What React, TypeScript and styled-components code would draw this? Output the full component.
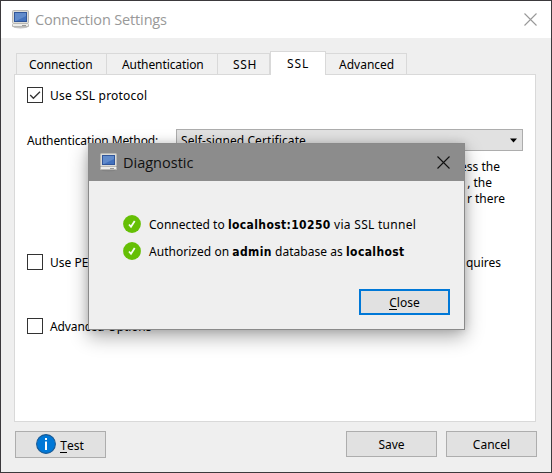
import React from 'react';
import styled, { createGlobalStyle } from 'styled-components';

const GlobalStyle = createGlobalStyle`
  * { box-sizing: border-box; }
  body { margin: 0; background: #3b393c; }
`;

const Window = styled.main`
  position: relative;
  display: flex;
  flex-direction: column;
  width: 552px;
  height: 473px;
  border: 1px solid #3b393c;
  background: #efefef;
  color: #000;
  font: 12px/16px 'Noto Sans', 'Open Sans', sans-serif;
  overflow: hidden;
  white-space: nowrap;
`;

const TitleBar = styled.header`
  display: flex;
  align-items: center;
  height: 37px;
  padding: 0 14px 0 11px;
  background: #fff;
  color: #999;
`;

const Title = styled.h1<{ $tracking: number }>`
  flex: 1;
  margin: 0 0 0 6px;
  font: 400 14.5px/20px 'Open Sans', 'Noto Sans', sans-serif;
  letter-spacing: ${(p) => p.$tracking}px;
`;

const Tracked = styled.span<{ $tracking: number }>`
  letter-spacing: ${(p) => p.$tracking}px;
`;

const Caption = styled(Tracked)`
  display: block;
  padding-top: 2px;
`;

const TabBar = styled.nav`
  display: flex;
  align-items: flex-end;
  height: 36px;
  margin-left: 15px;
  flex: none;
`;

const Tab = styled.div<{ $width: number; $active?: boolean; $tracking?: number; $first?: boolean; $inset: number }>`
  position: relative;
  z-index: ${(p) => (p.$active ? 1 : 0)};
  width: ${(p) => p.$width}px;
  height: ${(p) => (p.$active ? 24 : 21)}px;
  margin-bottom: ${(p) => (p.$active ? -1 : 0)}px;
  padding: ${(p) => (p.$active ? 4 : 3)}px 0 0 ${(p) => p.$inset}px;
  border: 1px solid #d9d9d9;
  border-bottom: 0;
  border-left-width: ${(p) => (p.$first || p.$active ? 1 : 0)}px;
  border-right-width: 1px;
  background: ${(p) => (p.$active ? '#fff' : '#f0f0f0')};
  letter-spacing: ${(p) => p.$tracking ?? 0}px;
`;

const Panel = styled.section`
  display: flex;
  flex-direction: column;
  flex: none;
  width: 522px;
  height: 348px;
  margin-left: 13px;
  padding: 12px 12px 0;
  border: 1px solid #d9d9d9;
  background: #fff;
`;

const Option = styled.label`
  display: flex;
  align-items: center;
  height: 16px;
  gap: 7px;
`;

const Box = styled.span`
  display: flex;
  width: 16px;
  height: 16px;
  border: 1px solid #333;
  background: #fff;
`;

const MethodRow = styled.div`
  display: flex;
  align-items: center;
  height: 22px;
  margin-top: 26px;
`;

const MethodLabel = styled.span`
  width: 149px;
`;

const Select = styled.div`
  display: flex;
  align-items: center;
  justify-content: space-between;
  width: 347px;
  height: 22px;
  padding: 0 4px;
  border: 1px solid #adadad;
  background: #e1e1e1;
`;

const Notes = styled.div`
  display: flex;
  flex-direction: column;
  align-items: flex-end;
  height: 103px;
  padding-top: 8px;
`;

const NoteLine = styled.span<{ $end: number; $drop?: number }>`
  margin-right: ${(p) => p.$end}px;
  padding-top: ${(p) => p.$drop ?? 0}px;
`;

const PemRow = styled.div`
  display: flex;
  justify-content: space-between;
  height: 16px;
  margin-bottom: 48px;
`;

const Footer = styled.footer`
  display: flex;
  align-items: flex-start;
  gap: 9px;
  padding: 9px 14px 0;
`;

const Button = styled.button<{ $height?: number; $focused?: boolean; $push?: boolean }>`
  display: flex;
  align-items: center;
  justify-content: center;
  width: 91px;
  height: ${(p) => p.$height ?? 26}px;
  margin: 0 ${(p) => (p.$push ? 'auto' : 0)} 0 0;
  padding: ${(p) => (p.$push ? '0 1px 1px 0' : '2px 0 0')};
  border: ${(p) => (p.$focused ? '2px solid #0078d7' : '1px solid #adadad')};
  background: #e1e1e1;
  color: #000;
  font: inherit;
`;

const TestLabel = styled.span`
  margin: 4px 0 0 4px;
`;

const Mnemonic = styled.span`
  border-bottom: 1px solid #000;
  display: inline-block;
  line-height: 13px;
`;

const Dialog = styled.section`
  position: absolute;
  left: 87px;
  top: 142px;
  width: 377px;
  height: 187px;
  border: 1px solid #8a8a8a;
  background: #efefef;
  box-shadow: 0 7px 18px rgba(0, 0, 0, 0.32), 0 0 8px rgba(0, 0, 0, 0.14);
`;

const DialogBar = styled.header`
  display: flex;
  align-items: center;
  height: 37px;
  padding: 0 14px 0 11px;
  background: #8c8c8c;
  color: #111;
`;

const Results = styled.div`
  display: flex;
  flex-direction: column;
  gap: 9px;
  padding: 34px 0 0 34px;
`;

const Result = styled.div`
  display: flex;
  align-items: center;
  height: 18px;
  gap: 8px;
`;

const Message = styled.span`
  padding-top: 2px;
  white-space: pre;
`;

const Strong = styled.b`
  font: 700 12px/16px 'DejaVu Sans Condensed', 'DejaVu Sans', sans-serif;
  letter-spacing: 0.38px;
`;

const DialogActions = styled.div`
  display: flex;
  justify-content: flex-end;
  padding: 29px 14px 0 0;
`;

const ComputerIcon = () => (
  <svg width="17" height="19" viewBox="0 0 17 19">
    <ellipse cx="8.5" cy="17.3" rx="7" ry="1.1" fill="#777" opacity=".45" />
    <rect x=".5" y=".5" width="16" height="13" rx="1" fill="#dcdcd7" stroke="#b9b8b4" />
    <rect x="2.5" y="2.5" width="12" height="9" fill="#4372bd" stroke="#31569a" />
    <path d="M3 3h11v3L4 11H3z" fill="#6d96d2" opacity=".7" />
    <path d="M1.5 13.5h14l1 1v2H.5v-2z" fill="#ededea" stroke="#b9b8b4" />
    <path d="M10 15.5h4" stroke="#999" />
  </svg>
);

const CloseIcon = ({ color }: { color: string }) => (
  <svg width="13" height="13" viewBox="0 0 13 13">
    <path d="M.5 .5l12 12M12.5 .5l-12 12" stroke={color} strokeWidth="1.1" />
  </svg>
);

const SuccessIcon = () => (
  <svg width="18" height="18" viewBox="0 0 18 18">
    <circle cx="9" cy="9" r="8.9" fill="#65bf05" />
    <path d="M6 9.5l2 2.3L11.7 6" fill="none" stroke="#f4fff0" strokeWidth="1.8" />
  </svg>
);

const InfoIcon = () => (
  <svg width="20" height="20" viewBox="0 0 20 20">
    <circle cx="10" cy="10" r="9.4" fill="#0078d7" stroke="#1a5a94" strokeWidth="1.1" />
    <rect x="9" y="4" width="2" height="2" fill="#fff" />
    <rect x="9" y="7.5" width="2" height="8.5" fill="#fff" />
  </svg>
);

export default function App() {
  return (
    <>
      <GlobalStyle />
      <Window>
        <TitleBar>
          <ComputerIcon />
          <Title $tracking={-0.15}>Connection Settings</Title>
          <CloseIcon color="#999" />
        </TitleBar>
        <TabBar>
          <Tab $width={91} $inset={12} $first $tracking={-0.08}>Connection</Tab>
          <Tab $width={111} $inset={15} $tracking={-0.1}>Authentication</Tab>
          <Tab $width={52} $inset={15} $tracking={0.7}>SSH</Tab>
          <Tab $width={56} $inset={16} $active $tracking={0.9}>SSL</Tab>
          <Tab $width={81} $inset={13}>Advanced</Tab>
        </TabBar>
        <Panel>
          <Option>
            <Box>
              <svg width="14" height="14" viewBox="0 0 14 14">
                <path d="M2.2 7l3.2 3.3L12 3.7" fill="none" stroke="#333" strokeWidth="1.3" />
              </svg>
            </Box>
            <Caption $tracking={0.2}>Use SSL protocol</Caption>
          </Option>
          <MethodRow>
            <MethodLabel>
              <Caption $tracking={-0.1}>Authentication Method:</Caption>
            </MethodLabel>
            <Select>
              <Caption $tracking={0.09}>Self-signed Certificate</Caption>
              <svg width="9" height="5" viewBox="0 0 9 5">
                <path d="M1 .5h7L4.5 4.5z" />
              </svg>
            </Select>
          </MethodRow>
          <Notes>
            <NoteLine $end={23}>ess the</NoteLine>
            <NoteLine $end={31}>, the</NoteLine>
            <NoteLine $end={18}>r there</NoteLine>
          </Notes>
          <PemRow>
            <Option>
              <Box />
              <Caption $tracking={0}>Use PE</Caption>
            </Option>
            <NoteLine $end={22} $drop={1}>quires</NoteLine>
          </PemRow>
          <Option>
            <Box />
            <Caption $tracking={-0.1}>Advanced Options</Caption>
          </Option>
        </Panel>
        <Footer>
          <Button $height={27} $push>
            <InfoIcon />
            <TestLabel>
              <Mnemonic>T</Mnemonic>est
            </TestLabel>
          </Button>
          <Button>Save</Button>
          <Button>Cancel</Button>
        </Footer>
        <Dialog>
          <DialogBar>
            <ComputerIcon />
            <Title $tracking={0}>Diagnostic</Title>
            <CloseIcon color="#111" />
          </DialogBar>
          <Results>
            <Result>
              <SuccessIcon />
              <Message>
                <Tracked $tracking={0.03}>Connected to </Tracked>
                <Strong>localhost:10250</Strong>
                <Tracked $tracking={0.28}> via SSL tunnel</Tracked>
              </Message>
            </Result>
            <Result>
              <SuccessIcon />
              <Message>
                <Tracked $tracking={0.03}>Authorized on </Tracked>
                <Strong>admin</Strong>
                <Tracked $tracking={0.04}> database as </Tracked>
                <Strong>localhost</Strong>
              </Message>
            </Result>
          </Results>
          <DialogActions>
            <Button $focused>
              <span>
                <Mnemonic>C</Mnemonic>lose
              </span>
            </Button>
          </DialogActions>
        </Dialog>
      </Window>
    </>
  );
}
